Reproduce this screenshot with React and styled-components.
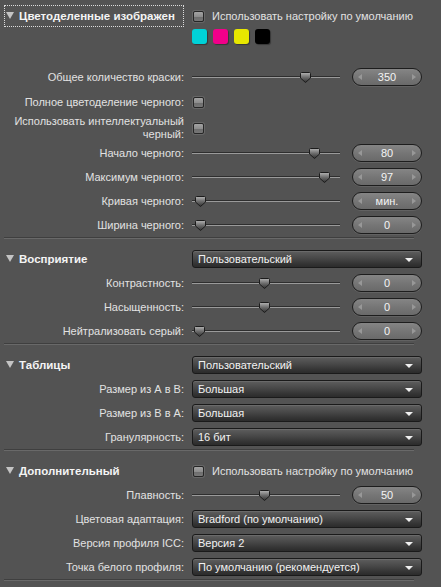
import React from "react";
import styled, { createGlobalStyle } from "styled-components";

const GlobalStyle = createGlobalStyle`
  html, body {
    margin: 0;
    padding: 0;
    background: #535353;
  }
  body {
    font-family: "Liberation Sans", Arial, sans-serif;
    font-size: 11px;
    color: #e2e2e2;
  }
`;

const Panel = styled.div`
  width: 441px;
  height: 587px;
  box-sizing: border-box;
  padding: 4px 19px 0 0;
  background: #535353;
  overflow: hidden;
`;

const Section = styled.div`
  padding-top: ${(p) => (p.$first ? 0 : 8)}px;
`;

const Separator = styled.div`
  margin: 0 8px 0 4px;
  border-top: 1px solid #3f3f3f;
  border-bottom: 1px solid #696969;
`;

const Row = styled.div`
  display: grid;
  grid-template-columns: 184px 1fr;
  column-gap: 8px;
  align-items: center;
  height: ${(p) => p.$h || 24}px;
`;

const Spacer = styled.div`
  height: ${(p) => p.$h}px;
`;

const Label = styled.div`
  text-align: right;
  line-height: 13px;
  white-space: nowrap;
`;

const HeaderTitle = styled.div`
  display: flex;
  align-items: center;
  gap: 5px;
  margin-left: 4px;
  height: 22px;
  padding-left: 1px;
  box-sizing: border-box;
  border: 1px ${(p) => (p.$focused ? "dotted #dcdcdc" : "solid transparent")};
  font-size: 11.5px;
  font-weight: bold;
  color: #f4f4f4;
  white-space: nowrap;
`;

const Caret = styled.svg`
  flex: none;
  width: 8px;
  height: 7px;
  margin-top: -2px;
`;

const CheckLine = styled.label`
  display: flex;
  align-items: center;
  gap: 8px;
  padding-left: 1px;
  white-space: nowrap;
`;

const Box = styled.span`
  flex: none;
  width: 9px;
  height: 9px;
  border: 1px solid #262626;
  border-radius: 2px;
  background: linear-gradient(#a3a3a3 0%, #8d8d8d 50%, #6c6c6c 51%, #777 100%);
  box-shadow: 0 0 0 1px #676767;
`;

const Swatches = styled.div`
  display: flex;
  gap: 6px;
`;

const Swatch = styled.span`
  width: 15px;
  height: 15px;
  border-radius: 3px;
  background: ${(p) => p.$c};
  box-shadow: 1px 1px 1px rgba(0, 0, 0, 0.35);
`;

const SliderLine = styled.div`
  display: flex;
  align-items: center;
  gap: 12px;
`;

const Track = styled.div`
  position: relative;
  width: 148px;
  height: 11px;

  &::before {
    content: "";
    position: absolute;
    left: 0;
    right: 0;
    top: 4px;
    height: 1px;
    border-top: 1px solid #2e2e2e;
    background: #9a9a9a;
  }
`;

const Thumb = styled.svg`
  position: absolute;
  top: 0;
  width: 11px;
  height: 11px;
`;

const Spin = styled.div`
  display: flex;
  align-items: center;
  justify-content: space-between;
  box-sizing: border-box;
  width: 70px;
  height: 18px;
  padding: 0 5px;
  border: 1px solid #1d1d1d;
  border-radius: 9px;
  background: linear-gradient(#858585, #737373 60%, #6a6a6a);
  box-shadow: 0 1px 0 #626262;
  color: #f4f4f4;
`;

const Arrow = styled.span`
  width: 0;
  height: 0;
  border-top: 3px solid transparent;
  border-bottom: 3px solid transparent;
  ${(p) =>
    p.$right
      ? "border-left: 4px solid #989898;"
      : "border-right: 4px solid #989898;"}
`;

const Select = styled.div`
  display: flex;
  align-items: center;
  justify-content: space-between;
  box-sizing: border-box;
  height: 18px;
  padding: 0 8px 0 5px;
  border: 1px solid #1a1a1a;
  border-radius: 3px;
  background: linear-gradient(#5e5e5e 0%, #4a4a4a 40%, #343434 80%, #2b2b2b 100%);
  box-shadow: inset 0 1px 0 #6a6a6a;
  color: #f2f2f2;
  white-space: nowrap;
`;

const SelectArrow = styled.span`
  width: 0;
  height: 0;
  border-left: 4px solid transparent;
  border-right: 4px solid transparent;
  border-top: 4px solid #f0f0f0;
  margin-top: 2px;
`;

function TriangleIcon() {
  return (
    <Caret viewBox="0 0 8 7">
      <polygon points="0,0 8,0 4,7" fill="#c4c4c4" />
    </Caret>
  );
}

function Header({ title, focused }) {
  return (
    <HeaderTitle $focused={focused}>
      <TriangleIcon />
      {title}
    </HeaderTitle>
  );
}

function CheckBox({ text }) {
  return (
    <CheckLine>
      <Box />
      {text}
    </CheckLine>
  );
}

function Slider({ pos, value }) {
  const left = 6 + pos * 136 - 5.5;
  return (
    <SliderLine>
      <Track>
        <Thumb viewBox="0 0 11 11" style={{ left }}>
          <defs>
            <linearGradient id="tg" x1="0" y1="0" x2="0" y2="1">
              <stop offset="0" stopColor="#b4b4b4" />
              <stop offset="0.5" stopColor="#6a6a6a" />
              <stop offset="1" stopColor="#2f2f2f" />
            </linearGradient>
          </defs>
          <path
            d="M1.5 0.5 H9.5 Q10.5 0.5 10.5 1.5 V6 L5.5 10.5 L0.5 6 V1.5 Q0.5 0.5 1.5 0.5 Z"
            fill="url(#tg)"
            stroke="#1c1c1c"
            strokeWidth="1"
          />
        </Thumb>
      </Track>
      <Spin>
        <Arrow />
        {value}
        <Arrow $right />
      </Spin>
    </SliderLine>
  );
}

function Dropdown({ value }) {
  return (
    <Select>
      {value}
      <SelectArrow />
    </Select>
  );
}

export default function App() {
  return (
    <Panel>
      <GlobalStyle />
      <Section $first>
        <Row>
          <Header title="Цветоделенные изображен" focused />
          <CheckBox text="Использовать настройку по умолчанию" />
        </Row>
        <Row $h={16}>
          <span />
          <Swatches>
            <Swatch $c="#00d2d8" />
            <Swatch $c="#f2008a" />
            <Swatch $c="#e8e800" />
            <Swatch $c="#000000" />
          </Swatches>
        </Row>
        <Spacer $h={21} />
        <Row>
          <Label>Общее количество краски:</Label>
          <Slider pos={0.79} value="350" />
        </Row>
        <Row $h={26}>
          <Label>Полное цветоделение черного:</Label>
          <CheckBox />
        </Row>
        <Row $h={26}>
          <Label>
            Использовать интеллектуальный
            <br />
            черный:
          </Label>
          <CheckBox />
        </Row>
        <Row>
          <Label>Начало черного:</Label>
          <Slider pos={0.86} value="80" />
        </Row>
        <Row>
          <Label>Максимум черного:</Label>
          <Slider pos={0.93} value="97" />
        </Row>
        <Row>
          <Label>Кривая черного:</Label>
          <Slider pos={0.02} value="мин." />
        </Row>
        <Row>
          <Label>Ширина черного:</Label>
          <Slider pos={0.02} value="0" />
        </Row>
      </Section>
      <Separator />

      <Section>
        <Row>
          <Header title="Восприятие" />
          <Dropdown value="Пользовательский" />
        </Row>
        <Row>
          <Label>Контрастность:</Label>
          <Slider pos={0.49} value="0" />
        </Row>
        <Row>
          <Label>Насыщенность:</Label>
          <Slider pos={0.49} value="0" />
        </Row>
        <Row>
          <Label>Нейтрализовать серый:</Label>
          <Slider pos={0.01} value="0" />
        </Row>
      </Section>
      <Separator />

      <Section>
        <Row>
          <Header title="Таблицы" />
          <Dropdown value="Пользовательский" />
        </Row>
        <Row>
          <Label>Размер из А в В:</Label>
          <Dropdown value="Большая" />
        </Row>
        <Row>
          <Label>Размер из В в А:</Label>
          <Dropdown value="Большая" />
        </Row>
        <Row>
          <Label>Гранулярность:</Label>
          <Dropdown value="16 бит" />
        </Row>
      </Section>
      <Separator />

      <Section>
        <Row>
          <Header title="Дополнительный" />
          <CheckBox text="Использовать настройку по умолчанию" />
        </Row>
        <Row>
          <Label>Плавность:</Label>
          <Slider pos={0.49} value="50" />
        </Row>
        <Row>
          <Label>Цветовая адаптация:</Label>
          <Dropdown value="Bradford (по умолчанию)" />
        </Row>
        <Row>
          <Label>Версия профиля ICC:</Label>
          <Dropdown value="Версия 2" />
        </Row>
        <Row>
          <Label>Точка белого профиля:</Label>
          <Dropdown value="По умолчанию (рекомендуется)" />
        </Row>
      </Section>
      <Separator />
    </Panel>
  );
}
